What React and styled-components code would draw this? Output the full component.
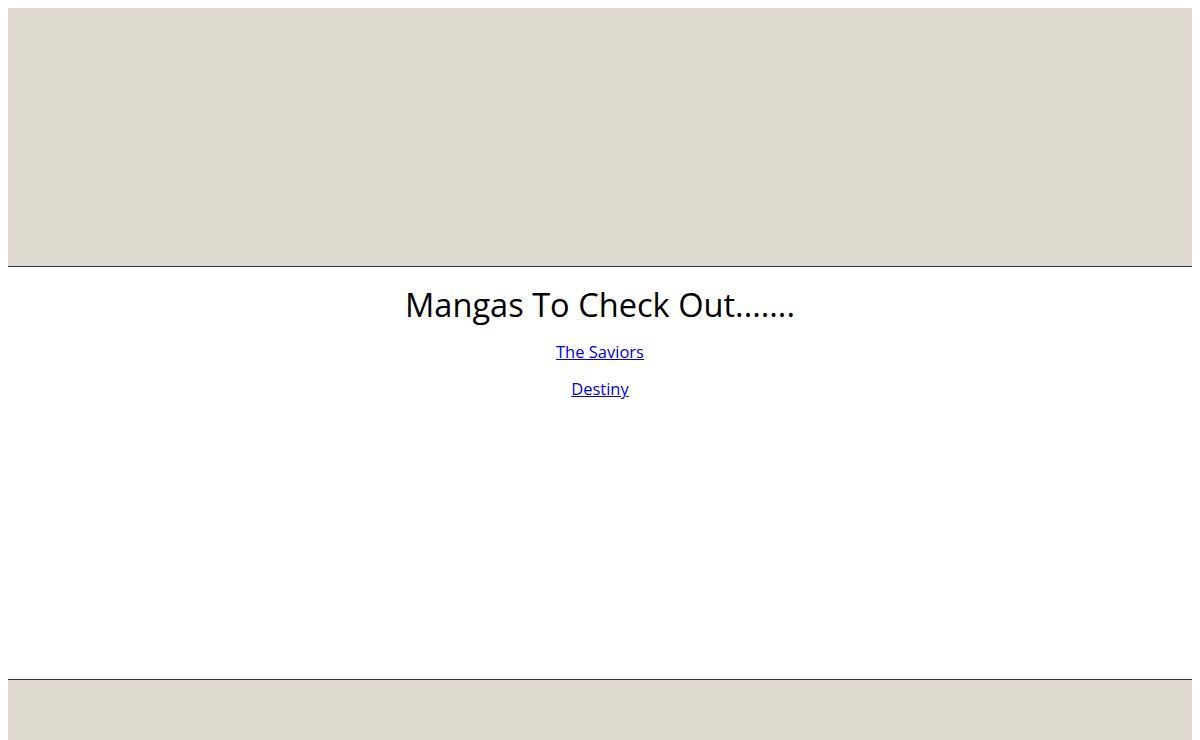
import React from "react";
import styled, { createGlobalStyle } from "styled-components";

const Global = createGlobalStyle`
  body {
    margin: 8px;
    font-family: "Open Sans", "Noto Sans", sans-serif;
    background: #ffffff;
  }
`;

const Header = styled.header`
  height: 258px;
  background: #dedacf;
  border-bottom: 1px solid #333;
`;

const Main = styled.main`
  height: 412px;
  display: flex;
  flex-direction: column;
  align-items: center;
  padding-top: 16px;
  box-sizing: border-box;
`;

const Title = styled.h1`
  margin: 0 0 13px;
  font-size: 32.6px;
  font-weight: 400;
  color: #000;
  line-height: 44px;
`;

const MangaLink = styled.a`
  font-size: 16.5px;
  line-height: 23px;
  color: #0000ee;
  text-decoration: underline;
  margin-bottom: 14px;
`;

const Footer = styled.footer`
  height: 80px;
  background: #dedacf;
  border-top: 1px solid #333;
`;

export default function App() {
  return (
    <>
      <Global />
      <Header />
      <Main>
        <Title>Mangas To Check Out.......</Title>
        <MangaLink href="#">The Saviors</MangaLink>
        <MangaLink href="#">Destiny</MangaLink>
      </Main>
      <Footer />
    </>
  );
}
